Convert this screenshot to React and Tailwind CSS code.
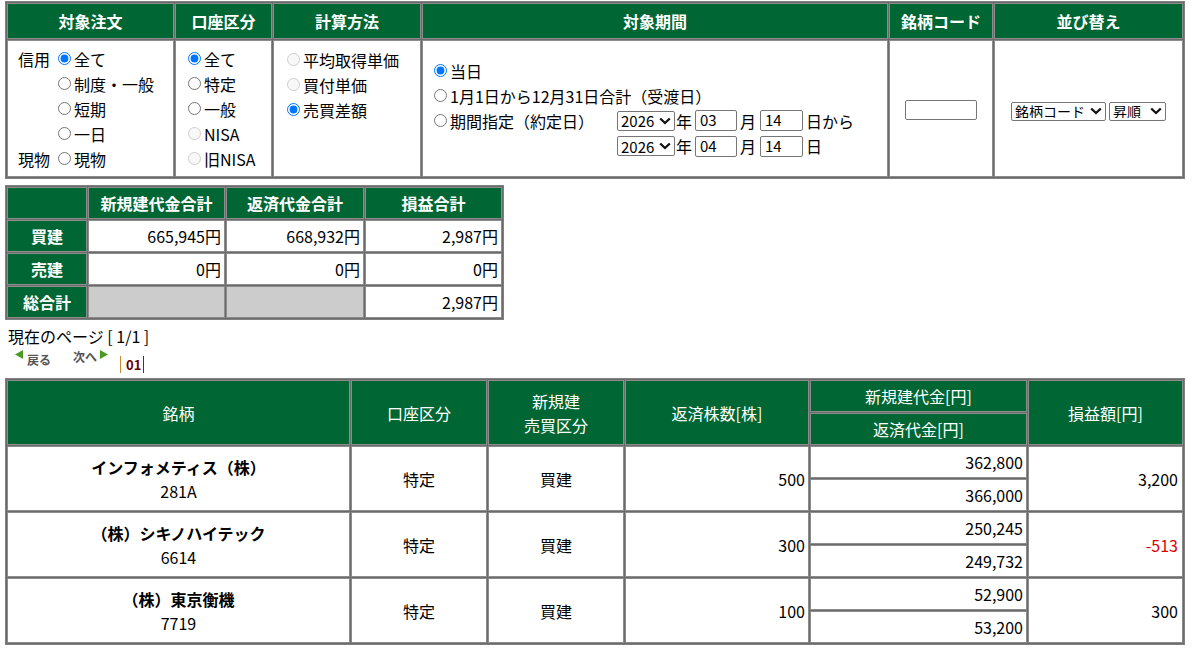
import React from 'react';

const cell = 'border border-[#8c8c8c]';
const head = 'border border-[#8c8c8c] bg-[#006633] text-white';

function Radio({ name, checked, disabled }) {
  return (
    <input
      type='radio'
      name={name}
      defaultChecked={checked}
      disabled={disabled}
      className='m-0 mr-[3px] h-[13px] w-[13px] shrink-0'
    />
  );
}

function Opt({ name, checked, disabled, children, label }) {
  return (
    <div className='flex h-[25px] items-center whitespace-nowrap'>
      {label !== undefined && <span className='w-[40px]'>{label}</span>}
      <Radio name={name} checked={checked} disabled={disabled} />
      <span>{children}</span>
    </div>
  );
}

// select with the chevron drawn over it
function Sel({ className, value, children }) {
  return (
    <span className='relative inline-flex'>
      <select
        defaultValue={value}
        className={`appearance-none rounded-[2px] border border-[#767676] bg-white pl-[3px] leading-none ${className}`}
      >
        {children}
      </select>
      <svg
        width='12'
        height='8'
        viewBox='0 0 12 8'
        className='pointer-events-none absolute right-[4px] top-1/2 -translate-y-1/2'
      >
        <polyline points='1.2,1.5 6,6 10.8,1.5' fill='none' stroke='#111' strokeWidth='2.3' />
      </svg>
    </span>
  );
}

function DateGroup({ month, day, suffix }) {
  return (
    <div className='flex items-center whitespace-nowrap'>
      <Sel value='2026' className='h-[20px] w-[58px] text-[15px]'>
        <option>2026</option>
      </Sel>
      <span className='ml-[1px]'>年</span>
      <input
        type='text'
        defaultValue={month}
        className='ml-[3px] h-[21px] w-[42px] rounded-[2px] border border-[#767676] px-[4px] text-[15px]'
      />
      <span className='ml-[3px]'>月</span>
      <input
        type='text'
        defaultValue={day}
        className='ml-[4px] h-[21px] w-[43px] rounded-[2px] border border-[#767676] px-[4px] text-[15px]'
      />
      <span className='ml-[3px]'>{suffix}</span>
    </div>
  );
}

function SearchTable() {
  return (
    <table className='w-[1180px] table-fixed border-separate border-spacing-[1px] border border-[#808080] bg-[#6b6b6b]'>
      <thead>
        <tr>
          <th className={`${head} h-[36px] w-[167px] font-bold`}>対象注文</th>
          <th className={`${head} w-[97px] font-bold`}>口座区分</th>
          <th className={`${head} w-[148px] font-bold`}>計算方法</th>
          <th className={`${head} w-[466px] font-bold`}>対象期間</th>
          <th className={`${head} w-[104px] font-bold`}>銘柄コード</th>
          <th className={`${head} font-bold`}>並び替え</th>
        </tr>
      </thead>
      <tbody>
        <tr>
          <td className={`${cell} h-[137px] bg-white pl-[10px] align-middle`}>
            <Opt name='order' label='信用' checked>全て</Opt>
            <Opt name='order' label=''>制度・一般</Opt>
            <Opt name='order' label=''>短期</Opt>
            <Opt name='order' label=''>一日</Opt>
            <Opt name='order' label='現物'>現物</Opt>
          </td>
          <td className={`${cell} bg-white pl-[12px] align-middle`}>
            <Opt name='acct' checked>全て</Opt>
            <Opt name='acct'>特定</Opt>
            <Opt name='acct'>一般</Opt>
            <Opt name='acct' disabled>NISA</Opt>
            <Opt name='acct' disabled>旧NISA</Opt>
          </td>
          <td className={`${cell} bg-white pl-[13px] pt-[6px] align-top`}>
            <Opt name='calc' disabled>平均取得単価</Opt>
            <Opt name='calc' disabled>買付単価</Opt>
            <Opt name='calc' checked>売買差額</Opt>
          </td>
          <td className={`${cell} bg-white pl-[11px] align-middle`}>
            <Opt name='period' checked>当日</Opt>
            <Opt name='period'>1月1日から12月31日合計（受渡日）</Opt>
            <div className='flex h-[25px] items-center'>
              <div className='w-[183px]'>
                <Opt name='period'>期間指定（約定日）</Opt>
              </div>
              <DateGroup month='03' day='14' suffix='日から' />
            </div>
            <div className='flex h-[26px] items-center pl-[183px]'>
              <DateGroup month='04' day='14' suffix='日' />
            </div>
          </td>
          <td className={`${cell} bg-white text-center align-middle`}>
            <input
              type='text'
              className='h-[20px] w-[72px] rounded-[2px] border border-[#767676] px-[3px] text-[14px]'
            />
          </td>
          <td className={`${cell} bg-white text-center align-middle`}>
            <div className='mt-[5px] flex justify-center gap-[3px]'>
              <Sel value='code' className='h-[19px] w-[95px] text-[14px]'>
                <option value='code'>銘柄コード</option>
              </Sel>
              <Sel value='asc' className='h-[19px] w-[57px] text-[14px]'>
                <option value='asc'>昇順</option>
              </Sel>
            </div>
          </td>
        </tr>
      </tbody>
    </table>
  );
}

function SummaryTable() {
  const rows = [
    ['買建', '665,945円', '668,932円', '2,987円'],
    ['売建', '0円', '0円', '0円'],
  ];
  return (
    <table className='mt-[6px] w-[499px] table-fixed border-separate border-spacing-[1px] border border-[#808080] bg-[#6b6b6b]'>
      <thead>
        <tr>
          <th className={`${head} h-[32px] w-[80px]`}></th>
          <th className={`${head} w-[137px] font-bold`}>新規建代金合計</th>
          <th className={`${head} w-[138px] font-bold`}>返済代金合計</th>
          <th className={`${head} font-bold`}>損益合計</th>
        </tr>
      </thead>
      <tbody>
        {rows.map((r) => (
          <tr key={r[0]}>
            <th className={`${head} h-[32px] font-bold`}>{r[0]}</th>
            {r.slice(1).map((v, i) => (
              <td key={i} className={`${cell} bg-white pr-[3px] text-right`}>
                {v}
              </td>
            ))}
          </tr>
        ))}
        <tr>
          <th className={`${head} h-[32px] font-bold`}>総合計</th>
          <td className={`${cell} bg-[#cccccc]`}></td>
          <td className={`${cell} bg-[#cccccc]`}></td>
          <td className={`${cell} bg-white pr-[3px] text-right`}>2,987円</td>
        </tr>
      </tbody>
    </table>
  );
}

function Tri({ dir }) {
  return (
    <svg width='8' height='9' viewBox='0 0 8 9' className='shrink-0'>
      <polygon
        points={dir === 'left' ? '8,0 8,9 0,4.5' : '0,0 0,9 8,4.5'}
        fill='#4a9a26'
      />
    </svg>
  );
}

function Pager() {
  return (
    <div>
      <div className='mt-[4px] h-[24px] pl-[3px] leading-[24px]'>現在のページ [ 1/1 ]</div>
      <div className='flex h-[30px] pl-[10px] text-[12px] font-bold text-[#555555]'>
        <div className='mt-[2px] flex h-[16px] items-start gap-[4px]'>
          <Tri dir='left' />
          <span className='mt-[2px] leading-[16px]'>戻る</span>
        </div>
        <div className='ml-[22px] mt-[1px] flex h-[16px] items-start gap-[3px]'>
          <span className='leading-[16px]'>次へ</span>
          <span className='mt-[1px]'>
            <Tri dir='right' />
          </span>
        </div>
        <div className='ml-[12px] mt-[8px] flex h-[17px] items-center border-l border-r border-l-[#cc8a2e] border-r-[#662244] pl-[5px] pr-[2px] text-[13px] leading-[17px] text-[#660000]'>
          01
        </div>
      </div>
    </div>
  );
}

function ResultTable() {
  const data = [
    { name: 'インフォメティス（株）', code: '281A', qty: '500', open: '362,800', close: '366,000', pl: '3,200' },
    { name: '（株）シキノハイテック', code: '6614', qty: '300', open: '250,245', close: '249,732', pl: '-513' },
    { name: '（株）東京衡機', code: '7719', qty: '100', open: '52,900', close: '53,200', pl: '300' },
  ];
  return (
    <table className='w-[1180px] table-fixed border-separate border-spacing-[1px] border border-[#808080] bg-[#6b6b6b]'>
      <thead>
        <tr>
          <th rowSpan={2} className={`${head} w-[343px] font-normal`}>銘柄</th>
          <th rowSpan={2} className={`${head} w-[136px] font-normal`}>口座区分</th>
          <th rowSpan={2} className={`${head} w-[136px] font-normal leading-[24px]`}>
            新規建
            <br />
            売買区分
          </th>
          <th rowSpan={2} className={`${head} w-[184px] font-normal`}>返済株数[株]</th>
          <th className={`${head} h-[32px] w-[217px] font-normal`}>新規建代金[円]</th>
          <th rowSpan={2} className={`${head} font-normal`}>損益額[円]</th>
        </tr>
        <tr>
          <th className={`${head} h-[32px] font-normal`}>返済代金[円]</th>
        </tr>
      </thead>
      <tbody>
        {data.map((d) => (
          <React.Fragment key={d.code}>
            <tr>
              <td rowSpan={2} className={`${cell} bg-white text-center align-middle`}>
                <div className='font-bold leading-[24px]'>{d.name}</div>
                <div className='leading-[24px]'>{d.code}</div>
              </td>
              <td rowSpan={2} className={`${cell} bg-white text-center`}>特定</td>
              <td rowSpan={2} className={`${cell} bg-white text-center`}>買建</td>
              <td rowSpan={2} className={`${cell} bg-white pr-[3px] text-right`}>{d.qty}</td>
              <td className={`${cell} h-[32px] bg-white pr-[3px] text-right`}>{d.open}</td>
              <td
                rowSpan={2}
                className={`${cell} bg-white pr-[4px] text-right ${d.pl.startsWith('-') ? 'text-[#dd0000]' : ''}`}
              >
                {d.pl}
              </td>
            </tr>
            <tr>
              <td className={`${cell} h-[32px] bg-white pr-[3px] text-right`}>{d.close}</td>
            </tr>
          </React.Fragment>
        ))}
      </tbody>
    </table>
  );
}

export default function App() {
  return (
    <div className="min-h-screen bg-white pl-[5px] pt-[1px] font-['Noto_Sans_CJK_JP','Noto_Sans',sans-serif] text-[16px] text-black">
      <SearchTable />
      <SummaryTable />
      <Pager />
      <ResultTable />
    </div>
  );
}
